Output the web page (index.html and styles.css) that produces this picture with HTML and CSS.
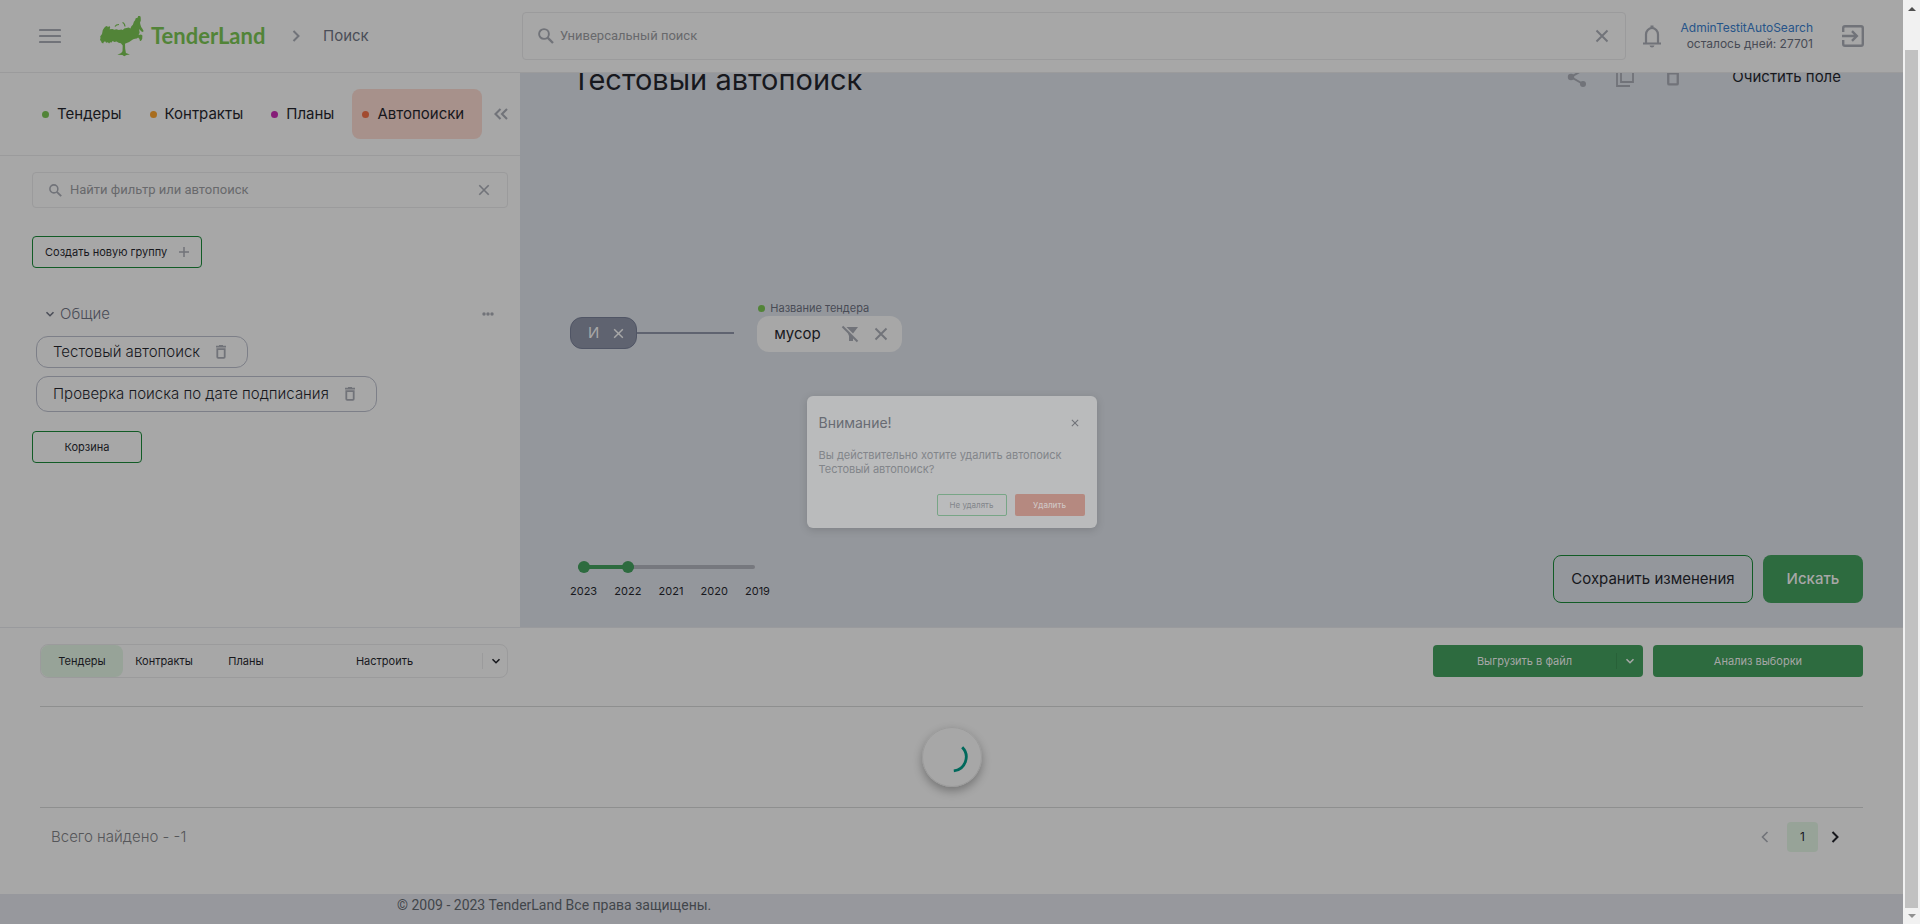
FILE: index.html
```html
<!DOCTYPE html>
<html lang="ru">
<head>
<meta charset="utf-8">
<title>TenderLand — Поиск</title>
<link rel="stylesheet" href="styles.css">
</head>
<body>
<svg class="sprite" aria-hidden="true">
  <symbol id="close" viewBox="0 0 14 14"><path d="M1.500 1.500l11 11M12.500 1.500l-11 11" fill="none" stroke="currentColor" stroke-width="1.900"/></symbol>
  <symbol id="loupe" viewBox="0 0 16 16"><circle cx="6" cy="6" r="4.900" fill="none" stroke="currentColor" stroke-width="1.900"/><path d="M9.600 9.600l5.400 5.400" stroke="currentColor" stroke-width="2.300"/></symbol>
  <symbol id="down" viewBox="0 0 10 10"><path d="M1.500 3.200l3.500 3.500 3.500-3.500" fill="none" stroke="currentColor" stroke-width="1.600"/></symbol>
  <symbol id="right" viewBox="0 0 8 12"><path d="M1.500 1l5 5-5 5" fill="none" stroke="currentColor" stroke-width="2"/></symbol>
  <symbol id="left" viewBox="0 0 8 12"><path d="M6.500 1l-5 5 5 5" fill="none" stroke="currentColor" stroke-width="1.600"/></symbol>
  <symbol id="trash" viewBox="0 0 12 14"><path d="M1 1.700h10M4 .8h4" stroke="currentColor" stroke-width="1.700"/><path d="M2.300 4.200h7.400v7.800q0 .8-.8.8h-5.800q-.8 0-.8-.8z" fill="none" stroke="currentColor" stroke-width="1.800"/></symbol>
</svg>
<div class="window">
  <div class="page">
    <header class="header">
      <div class="brand">
        <button class="icon-btn" aria-label="Меню"><svg width="22" height="16" viewBox="0 0 22 16"><path d="M1 2h20M1 8h20M1 14h20" stroke="currentColor" stroke-width="2.200" stroke-linecap="round"/></svg></button>
        <a class="logo" href="#">
          <svg width="48" height="42" viewBox="0 0 48 42" fill="currentColor"><path d="M1 24l.5-2-.3-1.500 1.800-2.500.8-4 1.700-2.600 1.400-1.200 1.300-.2.600 1.200 1.600-1.200.8 1.500-.6 1.800 2.800-.2 2 .7 2-.6 2.400.9 2.500-.5 1.500.4 1.500-1.400 2.200-.5 2.200-.6 1.700.9 1-2.200 1.500-1.400 1-3 1.200-1.600.6-2 1.900-.4.6-1.800 1.700-.6.8 2 .1 3.200-.8 2.200.5 2.300.7 2 1.200 1.600 1.200 2.200-.7 1.200-1.800-.9-1.500-2-.4.5.4 3-1 2.200 2.400-.3 1.400 1-.2 3.500-1.300 2-1.100-.4-.3-1.800-1.400-1.300-1.300 1-1.800.2-1.800.4-2.200 1.500-1.800 1.400-2.500 1-1.700.6.2 5 .7 4.200 4 1.500-3.400.5-2.300 1.300-1.800-1.300-5-.2 3.800-1.600 1.300-1.800.2-5.800-1.800-2.200-2.300-.6-2-1.300-2.200.5-1.800-.9-1 1.600-1.500-.3-1 1.300-1.200-1.300-1.800.5-1-1.600-1.300.7-.6 1.500-1.500-.6-.7-1.800z"/><path d="M16 10.500q1-2 4-2M23.500 6.500q2 .5 2.500 4" fill="none" stroke="currentColor" stroke-width="1.200"/></svg>
          <span class="logo-text">TenderLand</span>
        </a>
        <svg class="crumb-arrow" width="8" height="12"><use href="#right"/></svg>
        <span class="crumb">Поиск</span>
      </div>
      <label class="search"><svg width="16" height="16"><use href="#loupe"/></svg><input type="text" aria-label="Универсальный поиск" placeholder="Универсальный поиск"><button class="icon-btn" aria-label="Очистить"><svg width="14" height="14"><use href="#close"/></svg></button></label>
      <div class="account">
        <button class="icon-btn" aria-label="Уведомления"><svg width="20" height="24" viewBox="0 0 20 24"><path d="M1 19.500h18M4 19v-8.500a6 6.500 0 0 1 12 0V19" fill="none" stroke="currentColor" stroke-width="2.200"/><path d="M8.500 1.500h3v3h-3zM7.500 21.500h5q-.5 2-2.500 2t-2.500-2z" fill="currentColor"/></svg></button>
        <div class="user"><a href="#">AdminTestitAutoSearch</a><span>осталось дней: 27701</span></div>
        <button class="icon-btn" aria-label="Выйти"><svg width="24" height="24" viewBox="0 0 24 24" fill="none" stroke="currentColor" stroke-width="2.400"><path d="M2.200 8V4q0-1.800 1.800-1.800h16q1.800 0 1.800 1.800v16q0 1.800-1.800 1.800H4q-1.800 0-1.800-1.800v-4M1 12h14M11 7.200l4.800 4.800-4.800 4.800"/></svg></button>
      </div>
    </header>

    <div class="workspace">
      <aside class="sidebar">
        <nav class="tabs">
          <button class="tab"><i class="dot green"></i>Тендеры</button>
          <button class="tab"><i class="dot orange"></i>Контракты</button>
          <button class="tab"><i class="dot purple"></i>Планы</button>
          <button class="tab active"><i class="dot red"></i>Автопоиски</button>
          <button class="icon-btn collapse" aria-label="Свернуть"><svg width="14" height="12" viewBox="0 0 14 12"><path d="M6.500 1l-5 5 5 5M13 1L8 6l5 5" fill="none" stroke="currentColor" stroke-width="2.100"/></svg></button>
        </nav>
        <div class="sidebar-body">
          <label class="filter"><svg width="13" height="13"><use href="#loupe"/></svg><input type="text" aria-label="Найти фильтр или автопоиск" placeholder="Найти фильтр или автопоиск"><button class="icon-btn" aria-label="Очистить фильтр"><svg width="12" height="12"><use href="#close"/></svg></button></label>
          <button class="outline create">Создать новую группу<svg width="10" height="10" viewBox="0 0 10 10"><path d="M0 5h10M5 0v10" stroke="currentColor" stroke-width="1.500"/></svg></button>
          <div class="group">
            <button class="group-name"><svg width="10" height="10"><use href="#down"/></svg>Общие</button>
            <button class="icon-btn" aria-label="Действия"><svg width="12" height="4" viewBox="0 0 12 4" fill="currentColor"><circle cx="2" cy="2" r="1.700"/><circle cx="6" cy="2" r="1.700"/><circle cx="10" cy="2" r="1.700"/></svg></button>
          </div>
          <div class="chips">
            <div class="chip">Тестовый автопоиск<button class="icon-btn" aria-label="Удалить автопоиск"><svg width="12" height="14"><use href="#trash"/></svg></button></div>
            <div class="chip tall">Проверка поиска по дате подписания<button class="icon-btn" aria-label="Удалить автопоиск"><svg width="12" height="14"><use href="#trash"/></svg></button></div>
          </div>
          <button class="outline bin">Корзина</button>
        </div>
      </aside>

      <main class="builder">
        <div class="title-row">
          <h1>Тестовый автопоиск</h1>
          <div class="actions">
            <button class="icon-btn" aria-label="Поделиться"><svg width="20" height="20" viewBox="0 0 20 20"><path d="M16 3L4 10l12 7" fill="none" stroke="currentColor" stroke-width="2"/><g fill="currentColor"><circle cx="16" cy="3" r="3"/><circle cx="4" cy="10" r="3.200"/><circle cx="16" cy="17" r="3"/></g></svg></button>
            <button class="icon-btn" aria-label="Копировать"><svg width="20" height="20" viewBox="0 0 20 20" fill="none" stroke="currentColor" stroke-width="1.800"><path d="M6 1h12v14H6zM2 5v14h13"/></svg></button>
            <button class="icon-btn" aria-label="Удалить"><svg width="16" height="18" viewBox="0 0 12 14"><use href="#trash"/></svg></button>
            <button class="clear">Очистить поле</button>
          </div>
        </div>
        <div class="query">
          <div class="operator">И<button class="icon-btn" aria-label="Удалить группу"><svg width="11" height="11"><use href="#close"/></svg></button></div>
          <span class="link-line"></span>
          <div class="condition">
            <span class="condition-name"><i class="dot green"></i>Название тендера</span>
            <div class="value">мусор<button class="icon-btn" aria-label="Исключить"><svg width="18" height="18" viewBox="0 0 18 18"><path d="M5.500 2H17l-5 6.500zM6.500 7l5.500 5.500V16H8v-5z" fill="currentColor"/><path d="M1.500 1.500l15 15" stroke="currentColor" stroke-width="2"/></svg></button><button class="icon-btn" aria-label="Удалить условие"><svg width="14" height="14"><use href="#close"/></svg></button></div>
          </div>
        </div>
        <div class="bottom-row">
          <div class="years">
            <div class="track"><span class="range"></span></div>
            <div class="labels"><span>2023</span><span>2022</span><span>2021</span><span>2020</span><span>2019</span></div>
          </div>
          <div class="submit"><button class="save">Сохранить изменения</button><button class="find">Искать</button></div>
        </div>
      </main>
    </div>

    <section class="results">
      <div class="toolbar">
        <div class="switch">
          <button class="seg active">Тендеры</button><button class="seg">Контракты</button><button class="seg">Планы</button><button class="seg setup">Настроить</button><button class="seg more" aria-label="Ещё"><svg width="10" height="10"><use href="#down"/></svg></button>
        </div>
        <div class="exports">
          <div class="solid split"><button>Выгрузить в файл</button><button class="more" aria-label="Форматы"><svg width="10" height="10"><use href="#down"/></svg></button></div>
          <button class="solid">Анализ выборки</button>
        </div>
      </div>
      <div class="list"><div class="spinner"><svg width="32" height="32" viewBox="0 0 32 32"><path d="M26.200 6.200A14 14 0 0 1 17.800 29.900" fill="none" stroke="currentColor" stroke-width="2.800"/></svg></div></div>
      <div class="pager">
        <span>Всего найдено - -1</span>
        <div class="pages"><button class="icon-btn" aria-label="Назад"><svg width="8" height="12"><use href="#left"/></svg></button><button class="current">1</button><button class="icon-btn next" aria-label="Вперёд"><svg width="8" height="12"><use href="#right"/></svg></button></div>
      </div>
    </section>
    <footer class="footer">© 2009 - 2023 TenderLand Все права защищены.</footer>
  </div>
  <div class="scrollbar"><i class="arrow up"></i><span class="thumb"></span><i class="arrow down"></i></div>
</div>

<div class="overlay">
  <div class="dialog" role="dialog" aria-labelledby="dialog-title">
    <div class="dialog-head"><h2 id="dialog-title">Внимание!</h2><button class="icon-btn" aria-label="Закрыть"><svg width="8" height="8"><use href="#close"/></svg></button></div>
    <p>Вы действительно хотите удалить автопоиск<br>Тестовый автопоиск?</p>
    <div class="dialog-actions"><button class="keep">Не удалять</button><button class="remove">Удалить</button></div>
  </div>
</div>
</body>
</html>
```
FILE: styles.css
```css
* { box-sizing: border-box; }
body { margin: 0; font: 15px/20px Inter, "Noto Sans", sans-serif; color: #17181d; background: #a7a7a7; }
button, input { font: inherit; color: inherit; border: 0; background: none; padding: 0; margin: 0; }
svg { display: block; flex: none; }
.sprite { position: absolute; width: 0; height: 0; }
h1, h2, p { margin: 0; font-weight: 400; }
a { color: #265489; text-decoration: none; }
.icon-btn { display: flex; align-items: center; justify-content: center; color: #717379; }

.window { display: flex; min-height: 100vh; }
.page { flex: 1; min-width: 0; display: flex; flex-direction: column; }

/* Header */
.header { display: flex; align-items: center; height: 73px; border-bottom: 1px solid #9b9b9c; color: #717379; position: relative; background: #a7a7a7; }
.brand { display: flex; align-items: center; width: 522px; padding-left: 39px; }
.logo { display: flex; align-items: center; gap: 4px; margin-left: 38px; color: #528438; }
.logo svg { margin-top: 2px; }
.logo-text { width: 117px; font: 700 22px/30px Lato, sans-serif; }
.crumb-arrow { margin: 0 23px 0 24px; }
.crumb { color: #4b4e58; }
.search { flex: 1; display: flex; align-items: center; height: 48px; padding: 0 16px 0 15px; border: 1px solid #9b9b9c; border-radius: 4px; gap: 6px; }
.search input, .filter input { flex: 1; min-width: 0; font-family: Roboto, sans-serif; font-size: 13px; }
input::placeholder { color: #68696c; opacity: 1; }
.account { display: flex; align-items: center; width: 277px; padding: 0 38px 0 16px; }
.user { display: flex; flex-direction: column; flex: 1; text-align: right; font-size: 12px; line-height: 16px; margin-right: 28px; color: #484b55; }

/* Sidebar */
.workspace { display: flex; height: 555px; border-bottom: 1px solid #999a9d; }
.sidebar { width: 520px; }
.tabs { display: flex; align-items: center; height: 83px; border-bottom: 1px solid #9b9b9c; padding-left: 32px; }
.tab { display: flex; align-items: center; gap: 8px; height: 50px; padding: 0 18px 0 10px; border-radius: 8px; }
.tab.active { background: #a7918b; }
.dot { width: 7px; height: 7px; border-radius: 50%; flex: none; }
.green { background: #528438; }
.orange { background: #a86d1f; }
.purple { background: #861d78; }
.red { background: #a24b30; }
.collapse { margin-left: 12px; }
.sidebar-body { padding: 16px 12px 0 32px; display: flex; flex-direction: column; align-items: flex-start; }
.filter { display: flex; align-items: center; align-self: stretch; height: 36px; border: 1px solid #9b9b9c; border-radius: 4px; padding: 0 17px 0 16px; gap: 8px; color: #717379; }
.outline { height: 32px; border: 1px solid #125c26; border-radius: 4px; font-size: 11px; }
.create { display: flex; align-items: center; gap: 12px; padding: 0 12px; margin-top: 28px; }
.create svg { color: #717379; }
.group { display: flex; justify-content: space-between; align-self: stretch; padding: 0 14px 0 13px; margin-top: 36px; color: #4b4e58; }
.group-name { display: flex; align-items: center; gap: 5px; font-weight: 300; }
.chips { display: flex; flex-direction: column; align-items: flex-start; gap: 8px; margin: 12px 0 19px 4px; }
.chip { display: flex; align-items: center; gap: 15px; height: 32px; border: 1px solid #7d7f88; border-radius: 12px; padding: 0 20px 0 16px; font-weight: 300; }
.chip.tall { height: 36px; }
.bin { width: 110px; }

/* Query builder */
.builder { flex: 1; background: #94979c; display: flex; flex-direction: column; padding: 0 40px 24px 50px; overflow: hidden; }
.title-row { display: flex; justify-content: space-between; margin-top: -13px; padding: 0 22px 0 2px; height: 40px; }
h1 { font-size: 29px; line-height: 40px; }
.actions { display: flex; align-items: center; height: 34px; }
.actions .icon-btn { width: 48px; }
.clear { margin-left: 35px; }
.query { display: flex; align-items: flex-end; margin-top: 201px; }
.operator { display: flex; align-items: center; gap: 14px; height: 32px; padding: 0 12px 0 17px; border: 1px solid #505565; border-radius: 12px; background: #5f6370; color: #a7a7a7; margin-bottom: 3px; }
.operator .icon-btn { color: #a7a7a7; }
.link-line { width: 97px; height: 2px; background: #5f6370; margin-bottom: 18px; }
.condition { margin-left: 23px; }
.condition-name { display: flex; align-items: center; gap: 5px; padding: 0 0 1px 1px; font-size: 11px; line-height: 14px; color: #484b55; }
.value { display: flex; align-items: center; height: 36px; padding: 0 14px 0 17px; border-radius: 12px; background: #a7a7a7; }
.value .icon-btn:first-of-type { margin: 0 15px 0 20px; }
.bottom-row { display: flex; justify-content: space-between; align-items: flex-end; margin-top: auto; }
.query + .bottom-row { min-height: 48px; }
.years { width: 200px; padding-bottom: 2px; font-size: 11px; }
.track { height: 4px; width: 177px; margin-left: 8px; border-radius: 2px; background: #76787e; }
.range { display: flex; justify-content: space-between; align-items: center; width: 56px; height: 4px; background: #2d6b3f; border-radius: 2px; }
.range::before, .range::after { content: ""; width: 12px; height: 12px; border-radius: 50%; background: #2d6b3f; }
.labels { display: flex; justify-content: space-between; padding-top: 12px; }
.submit { display: flex; gap: 10px; }
.save, .find { height: 48px; border-radius: 8px; }
.save { width: 200px; border: 1px solid #125c26; }
.find { width: 100px; background: #2d6b3f; color: #a7a7a7; font-weight: 500; }

/* Results */
.results { padding: 16px 40px 0; flex: 1; }
.toolbar { display: flex; justify-content: space-between; align-items: center; font-size: 11px; }
.switch { display: flex; width: 468px; height: 34px; border: 1px solid #9b9b9c; border-radius: 8px; }
.seg { width: 82px; }
.seg.active { background: #97a398; border-radius: 8px; }
.seg.setup { width: 195px; }
.seg.more { flex: 1; display: flex; align-items: center; }
.seg.more::before, .split .more::before { content: ""; width: 1px; height: 16px; background: #9b9b9c; margin-right: 8px; }
.exports { display: flex; gap: 10px; }
.solid { width: 210px; height: 32px; border-radius: 4px; background: #2d6b3f; color: #a7a7a7; }
.split { display: flex; }
.split button:first-child { flex: 1; }
.split .more { display: flex; align-items: center; padding-right: 8px; }
.split .more::before { background: #286138; }
.list { display: flex; justify-content: center; align-items: center; height: 102px; margin-top: 28px; border-top: 1px solid #8e8f8f; border-bottom: 1px solid #8e8f8f; }
.spinner { width: 60px; height: 60px; border-radius: 50%; border: 1px solid #9b9b9b; display: flex; align-items: center; justify-content: center; color: #00695c; box-shadow: 0 4px 10px #0000004d; }
.pager { display: flex; justify-content: space-between; align-items: center; height: 57px; padding: 0 24px 0 11px; font-weight: 300; color: #555659; }
.pages { display: flex; align-items: center; }
.current { width: 31px; height: 30px; border-radius: 4px; background: #97a398; color: #17181d; font-size: 12px; font-weight: 400; margin: 0 13px 0 18px; }
.next { color: #17181d; }
.footer { height: 30px; background: #97989d; padding-left: 397px; font: 14px/22px Roboto, sans-serif; color: #42464b; }

/* Window scrollbar */
.scrollbar { width: 17px; background: #f1f1f1; display: flex; flex-direction: column; align-items: center; padding: 6px 0; }
.arrow { border: 4px solid transparent; height: 4px; }
.up { border-bottom-color: #505050; border-top: 0; margin: 1px 0 39px; }
.down { border-top-color: #909090; border-bottom: 0; margin-top: 6px; }
.thumb { width: 13px; flex: 1; background: #c1c1c1; }

/* Confirmation dialog */
.overlay { position: absolute; inset: 0 17px 0 0; display: flex; align-items: center; justify-content: center; }
.dialog { width: 290px; padding: 12px; border-radius: 6px; background: #babbbc; box-shadow: 0 2px 8px #00000026; color: #82858a; font-size: 11px; line-height: 14px; }
.dialog-head { display: flex; align-items: center; justify-content: space-between; padding: 4px 6px 0 0; }
h2 { font-size: 14px; line-height: 22px; color: #686b73; }
.dialog p { padding: 14px 0 18px; }
.dialog-actions { display: flex; justify-content: flex-end; gap: 8px; }
.keep, .remove { width: 70px; height: 22px; border-radius: 2px; font-size: 8px; line-height: 12px; }
.keep { border: 1px solid #78a586; }
.remove { background: #b58980; color: #cfc5c3; font-weight: 500; }
```
